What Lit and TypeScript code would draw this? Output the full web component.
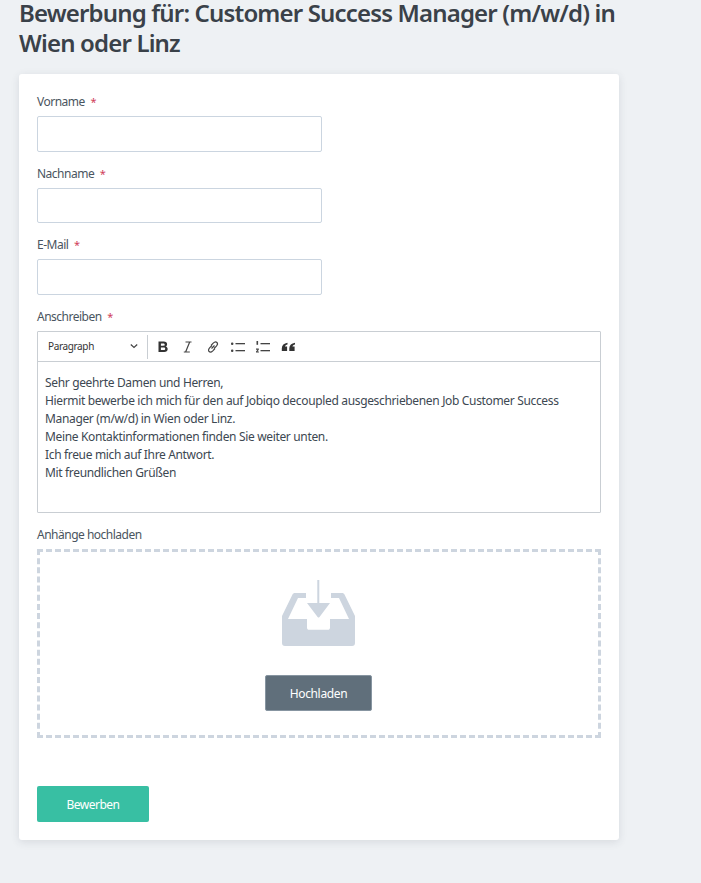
import { LitElement, html, css } from "lit";
import { customElement } from "lit/decorators.js";

@customElement("app-root")
export class AppRoot extends LitElement {
  static styles = css`
    :host { display: block; width: 701px; height: 883px; background: #eef1f4; font-family: "Noto Sans", "Open Sans", sans-serif; color: #3d4852; overflow: hidden; }
    .page { padding: 0 82px 0 19px; }
    h1 { margin: -2px 0 0; font-size: 24px; line-height: 30px; height: 76px; font-weight: 600; color: #3a4149; letter-spacing: -0.84px; width: 620px; }
    .card { width: 600px; height: 766px; box-sizing: border-box; background: #fff; border-radius: 3px; box-shadow: 0 2px 8px rgba(50,60,70,.12); padding: 18px 18px; display: flex; flex-direction: column; }
    label { display: block; font-size: 12px; line-height: 20px; height: 24px; letter-spacing: -0.5px; color: #4a5560; }
    .req { color: #d0405a; margin-left: 3px; font-size: 11px; }
    .in { display: block; box-sizing: border-box; width: 285px; height: 36px; border: 1px solid #cbd5e0; border-radius: 2px; margin-bottom: 12px; background: #fff; }
    .in.b { height: 35px; margin-bottom: 12px; }
    .editor { box-sizing: border-box; width: 564px; height: 182px; border: 1px solid #c9ced3; border-radius: 1px; margin-bottom: 12px; }
    .tb { height: 29px; border-bottom: 1px solid #c9ced3; display: flex; align-items: center; }
    .para { width: 99px; margin-left: 10px; display: flex; align-items: center; justify-content: space-between; font-size: 10px; line-height: 12px; margin-top: -2px; letter-spacing: -0.36px; color: #333; padding-right: 9px; box-sizing: border-box; }
    .sep { width: 1px; height: 24px; background: #c9ced3; margin-right: 7px; }
    .ic { width: 16px; height: 16px; margin-right: 9px; display: block; color: #333; }
    .body { padding: 12px 7px; font-size: 12px; line-height: 18px; letter-spacing: -0.34px; color: #3d4852; }
    .drop { box-sizing: border-box; width: 564px; height: 189px; border: 3px dashed #cdd5df; padding-right: 1px; display: flex; flex-direction: column; align-items: center; margin-bottom: 48px; }
    .inbox { display: block; margin-top: 28px; margin-bottom: 29px; flex: none; }
    .hoch { box-sizing: border-box; width: 107px; height: 36px; background: #606f7b; border: 1px solid #8795a1; border-radius: 2px; color: #fff; font: inherit; font-size: 12px; letter-spacing: -0.34px; }
    .apply { box-sizing: border-box; width: 112px; height: 36px; background: #38bfa3; border: none; border-radius: 2px; color: #fff; font: inherit; font-size: 12px; letter-spacing: -0.5px; }
  `;

  render() {
    return html`<div class="page">
      <h1>Bewerbung für: Customer Success Manager (m/w/d) in Wien oder Linz</h1>
      <div class="card">
        <label>Vorname <span class="req">*</span></label>
        <div class="in"></div>
        <label>Nachname <span class="req">*</span></label>
        <div class="in b"></div>
        <label>E-Mail <span class="req">*</span></label>
        <div class="in"></div>
        <label>Anschreiben <span class="req">*</span></label>
        <div class="editor">
          <div class="tb">
            <div class="para"><span>Paragraph</span>
              <svg width="8" height="8" viewBox="0 0 8 8"><path d="M.8 2.500 4 5.500l3.200-3" fill="none" stroke="#444" stroke-width="1.200"/></svg></div>
            <div class="sep"></div>
            <svg class="ic" viewBox="0 0 16 16"><path d="M3.500 2.500h5.300c2.100 0 3.300 1 3.300 2.700 0 1.100-.6 1.900-1.500 2.200 1.300.3 2.100 1.200 2.100 2.600 0 1.900-1.300 3-3.500 3H3.500zM5.900 4.400v2.300h2.400c1 0 1.400-.4 1.400-1.200 0-.7-.5-1.100-1.400-1.100zM5.900 8.500v2.600h2.800c1 0 1.500-.5 1.500-1.300 0-.9-.6-1.300-1.500-1.300z" fill="#333"/></svg>
            <svg class="ic" viewBox="0 0 16 16"><path d="M5.500 3h6M3.800 13h6M9.700 3 5.600 13" fill="none" stroke="#444" stroke-width="1.200"/></svg>
            <svg class="ic" viewBox="0 0 16 16"><g fill="none" stroke="#444" stroke-width="1.200"><path d="M7 6.500 4.800 8.700c-1.400 1.400-1.600 2.900-.7 3.800s2.400.6 3.700-.7l2.200-2.300"/><path d="M9 9.500l2.200-2.200c1.400-1.400 1.600-2.900.7-3.800s-2.400-.6-3.700.7L6 6.500"/><path d="M6.500 9.500 9.500 6.500"/></g></svg>
            <svg class="ic" viewBox="0 0 16 16"><g fill="#444"><rect x="1" y="3.500" width="2.400" height="2.400" rx="1"/><rect x="1" y="10.500" width="2.400" height="2.400" rx="1"/><rect x="5.500" y="4" width="9.500" height="1.300"/><rect x="5.500" y="11" width="9.500" height="1.300"/></g></svg>
            <svg class="ic" viewBox="0 0 16 16"><g fill="#444"><rect x="1.500" y="2" width="1.600" height="3.800"/><path d="M1 9.500h2.800v1.200L2.500 12.500h1.400v1H1v-1l1.500-1.800H1z"/><rect x="5.500" y="4" width="9.500" height="1.300"/><rect x="5.500" y="11" width="9.500" height="1.300"/></g></svg>
            <svg class="ic" viewBox="0 0 16 16"><path d="M7.500 3.800C4 4.500 1.800 6.200 1.800 9.200v2.800h5.300V7.400H5C5.200 6.500 6.200 5.800 7.500 5.600zM15 3.800c-3.500.7-5.700 2.400-5.700 5.400v2.800h5.300V7.400h-2.100c.2-.9 1.200-1.600 2.500-1.800z" fill="#333"/></svg>
          </div>
          <div class="body">
            Sehr geehrte Damen und Herren,<br>
            Hiermit bewerbe ich mich für den auf Jobiqo decoupled ausgeschriebenen Job Customer Success<br>Manager (m/w/d) in Wien oder Linz.<br>
            Meine Kontaktinformationen finden Sie weiter unten.<br>
            Ich freue mich auf Ihre Antwort.<br>
            Mit freundlichen Grüßen
          </div>
        </div>
        <label>Anhänge hochladen</label>
        <div class="drop">
          <svg class="inbox" width="73" height="66" viewBox="0 0 73 66">
            <path fill="#cdd5df" d="M35.300 0h2v23H48L37.500 37c-.6.700-1.300.7-1.900 0L25 23h10.300z"/>
            <path fill="#cdd5df" d="M13 13H24v5H16L6 39h19v8.500c0 1.500.7 2.300 2.300 2.300h18.400c1.500 0 2.300-.8 2.300-2.300V39h19L57 18h-8v-5h11c1.200 0 2 .5 2.500 1.500L73 36v27c0 2-1 3-3 3H3c-2 0-3-1-3-3V36l10.500-21.500c.5-1 1.300-1.500 2.500-1.500z"/>
          </svg>
          <button class="hoch">Hochladen</button>
        </div>
        <button class="apply">Bewerben</button>
      </div>
    </div>`;
  }
}
